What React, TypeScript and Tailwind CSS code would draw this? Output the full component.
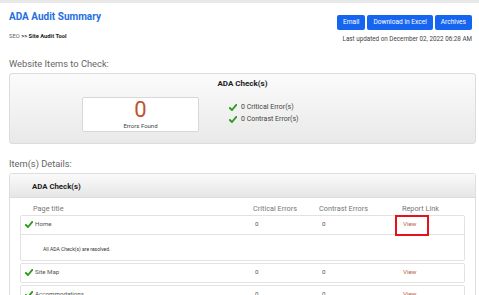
import { Fragment } from 'react';

interface PageRow {
  title: string;
  critical: number;
  contrast: number;
  note?: string;
  flagged?: boolean;
}

const rows: PageRow[] = [
  { title: 'Home', critical: 0, contrast: 0, note: 'All ADA Check(s) are resolved.', flagged: true },
  { title: 'Site Map', critical: 0, contrast: 0 },
  { title: 'Accommodations', critical: 0, contrast: 0 },
];

function Check({ className = '' }: { className?: string }) {
  return (
    <svg width="8" height="7" viewBox="0 0 8 7" className={className}>
      <path d="M0.8 4 L3 6 L7.3 0.9" fill="none" stroke="#2f9a1f" strokeWidth="1.9" strokeLinecap="round" strokeLinejoin="round" />
    </svg>
  );
}

export default function App() {
  return (
    <div className="w-[479px] h-[295px] overflow-hidden bg-white font-['Roboto',sans-serif]">
      <div className="h-[3px] bg-[#e8e8e8]" />

      <div className="pl-[9px] pr-[3px]">
        {/* Header */}
        <div className="flex justify-between items-start">
          <div className="pt-[7px]">
            <h1 className="text-[10px] leading-[14px] font-bold text-[#1f6fe0]">ADA Audit Summary</h1>
            <p className="mt-[8px] text-[5.8px] leading-[8px] text-[#666]">
              SEO <span className="font-bold text-[#222]">&gt;&gt; Site Audit Tool</span>
            </p>
          </div>
          <div className="pt-[12px] pr-[4px] flex flex-col items-end">
            <div className="flex gap-[2px]">
              {['Email', 'Download in Excel', 'Archives'].map((label) => (
                <button
                  key={label}
                  className="h-[15px] px-[6px] rounded-[2px] bg-[#1565f0] text-white text-[6.6px] leading-[15px]"
                >
                  {label}
                </button>
              ))}
            </div>
            <p className="mt-[5px] text-[6.3px] leading-[8px] text-[#444]">Last updated on December 02, 2022 06:28 AM</p>
          </div>
        </div>

        {/* Summary */}
        <h2 className="mt-[14px] text-[9.3px] leading-[14px] text-[#666]">Website Items to Check:</h2>
        <div className="mt-[2px] h-[71px] rounded-[3px] border border-[#dcdcdc] bg-gradient-to-b from-[#fbfbfb] to-[#e9e9e9]">
          <p className="pt-[5px] text-center text-[8px] leading-[10px] font-bold text-[#222]">ADA Check(s)</p>
          <div className="mt-[8px] flex items-start">
            <div className="ml-[72px] w-[117px] h-[35px] rounded-[2px] border border-[#d8d8d8] bg-white text-center">
              <p className="pt-[1px] text-[22px] leading-[22px] text-[#c0532f]">0</p>
              <p className="mt-[1px] text-[6px] leading-[8px] text-[#444]">Errors Found</p>
            </div>
            <div className="ml-[30px] pt-[4px] text-[7px] leading-[12px] text-[#444]">
              <div className="flex items-center gap-[4px]">
                <Check />
                0 Critical Error(s)
              </div>
              <div className="flex items-center gap-[4px]">
                <Check />
                0 Contrast Error(s)
              </div>
            </div>
          </div>
        </div>

        {/* Details */}
        <h2 className="mt-[13px] text-[9.3px] leading-[14px] text-[#666]">Item(s) Details:</h2>
        <div className="mt-[2px] rounded-[3px] border border-[#dedede] border-b-0">
          <div className="pt-[8px] pb-[5px] pl-[22px] text-[7.8px] leading-[10px] font-bold text-[#222] bg-gradient-to-b from-[#fafafa] to-[#e6e6e6] border-b border-[#dcdcdc]">
            ADA Check(s)
          </div>
          <div className="px-[10px]">
            <div className="pt-[6px] grid grid-cols-[233px_66px_83px_1fr] text-[7.3px] leading-[10px] text-[#777]">
              <span className="pl-[13px]">Page title</span>
              <span>Critical Errors</span>
              <span>Contrast Errors</span>
              <span>Report Link</span>
            </div>
            <div className="mt-[1px] flex flex-col gap-[2px]">
              {rows.map((row) => (
                <div key={row.title} className="relative border border-[#e2e2e2] rounded-[2px]">
                  <div className="h-[18px] grid grid-cols-[234px_67px_81px_1fr] items-center text-[6.2px] text-[#555]">
                    <span className="pl-[4px] flex items-center gap-[2px]">
                      <Check />
                      {row.title}
                    </span>
                    <span>{row.critical}</span>
                    <span>{row.contrast}</span>
                    <span className="text-[#b5603e]">View</span>
                  </div>
                  {row.note && (
                    <Fragment>
                      <div className="border-t border-[#e2e2e2] pt-[10px] pb-[7px] pl-[22px] text-[5px] leading-[8px] text-[#333]">
                        {row.note}
                      </div>
                    </Fragment>
                  )}
                  {row.flagged && (
                    <div className="absolute left-[374px] top-[-1px] w-[34px] h-[21px] border-2 border-[#e3121b]" />
                  )}
                </div>
              ))}
            </div>
          </div>
        </div>
      </div>
    </div>
  );
}
